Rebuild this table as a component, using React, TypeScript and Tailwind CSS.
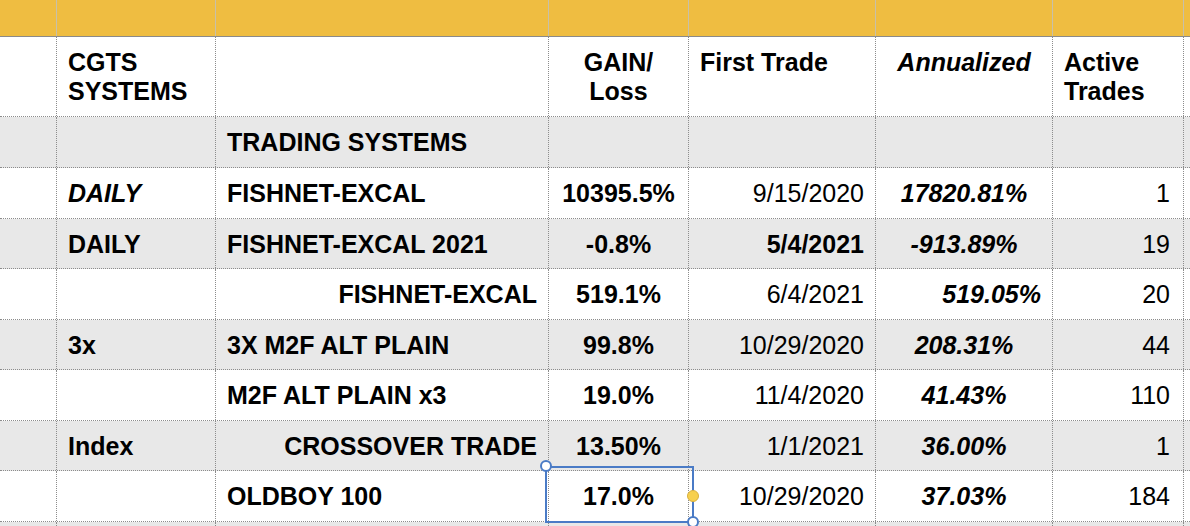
import React from "react";

type Cell = {
  t?: React.ReactNode;
  a?: "l" | "c" | "r";
  b?: boolean;
  i?: boolean;
};

const GRID =
  "grid grid-cols-[57px_159px_333px_140px_187px_177px_131px_6px]";

function Row({
  cells,
  gray,
  h,
}: {
  cells: Cell[];
  gray?: boolean;
  h: string;
}) {
  return (
    <div
      className={`${GRID} ${h} ${gray ? "bg-[#e8e8e8]" : "bg-white"} border-b border-dotted border-[#8c8c8c]`}
    >
      {cells.map((c, idx) => {
        const last = idx === cells.length - 1;
        const align =
          c.a === "r"
            ? "justify-end pr-[11px] pl-[6px]"
            : c.a === "c"
              ? "justify-center px-[6px]"
              : "justify-start pl-[11px] pr-[6px]";
        return (
          <div
            key={idx}
            className={`flex items-center pt-[2px] ${align} ${last ? "" : "border-r border-dotted border-[#8c8c8c]"} ${c.b ? "font-bold" : "font-normal"} ${c.i ? "italic" : ""} whitespace-nowrap`}
          >
            {c.t}
          </div>
        );
      })}
    </div>
  );
}

const E: Cell = {};

export default function App() {
  const rows: { cells: Cell[]; gray?: boolean; h: string }[] = [
    {
      gray: true,
      h: "h-[51px]",
      cells: [E, E, { t: "TRADING SYSTEMS", b: true }, E, E, E, E, E],
    },
    {
      h: "h-[51px]",
      cells: [
        E,
        { t: "DAILY", b: true, i: true },
        { t: "FISHNET-EXCAL", b: true },
        { t: "10395.5%", b: true, a: "c" },
        { t: "9/15/2020", a: "r" },
        { t: "17820.81%", b: true, i: true, a: "c" },
        { t: <span className="pr-[2px]">1</span>, a: "r" },
        E,
      ],
    },
    {
      gray: true,
      h: "h-[50px]",
      cells: [
        E,
        { t: "DAILY", b: true },
        { t: "FISHNET-EXCAL 2021", b: true },
        { t: "-0.8%", b: true, a: "c" },
        { t: "5/4/2021", b: true, a: "r" },
        { t: "-913.89%", b: true, i: true, a: "c" },
        { t: <span className="pr-[2px]">19</span>, a: "r" },
        E,
      ],
    },
    {
      h: "h-[51px]",
      cells: [
        E,
        E,
        { t: "FISHNET-EXCAL", b: true, a: "r" },
        { t: "519.1%", b: true, a: "c" },
        { t: "6/4/2021", a: "r" },
        { t: "519.05%", b: true, i: true, a: "r" },
        { t: <span className="pr-[2px]">20</span>, a: "r" },
        E,
      ],
    },
    {
      gray: true,
      h: "h-[50px]",
      cells: [
        E,
        { t: "3x", b: true },
        { t: "3X M2F ALT PLAIN", b: true },
        { t: "99.8%", b: true, a: "c" },
        { t: "10/29/2020", a: "r" },
        { t: "208.31%", b: true, i: true, a: "c" },
        { t: <span className="pr-[2px]">44</span>, a: "r" },
        E,
      ],
    },
    {
      h: "h-[51px]",
      cells: [
        E,
        E,
        { t: "M2F ALT PLAIN x3", b: true },
        { t: "19.0%", b: true, a: "c" },
        { t: "11/4/2020", a: "r" },
        { t: "41.43%", b: true, i: true, a: "c" },
        { t: <span className="pr-[2px]">110</span>, a: "r" },
        E,
      ],
    },
    {
      gray: true,
      h: "h-[50px]",
      cells: [
        E,
        { t: "Index", b: true },
        { t: "CROSSOVER TRADE", b: true, a: "r" },
        { t: "13.50%", b: true, a: "c" },
        { t: "1/1/2021", a: "r" },
        { t: "36.00%", b: true, i: true, a: "c" },
        { t: <span className="pr-[2px]">1</span>, a: "r" },
        E,
      ],
    },
    {
      h: "h-[51px]",
      cells: [
        E,
        E,
        { t: "OLDBOY 100", b: true },
        { t: "17.0%", b: true, a: "c" },
        { t: "10/29/2020", a: "r" },
        { t: "37.03%", b: true, i: true, a: "c" },
        { t: <span className="pr-[2px]">184</span>, a: "r" },
        E,
      ],
    },
  ];

  const hdr =
    "border-r border-dotted border-[#8c8c8c] pt-[11px] font-bold leading-[29px]";

  return (
    <div
      className="relative w-[1190px] h-[526px] overflow-hidden bg-white text-black text-[25px]"
      style={{ fontFamily: '"Liberation Sans", Arial, Helvetica, sans-serif' }}
    >
      {/* yellow top band */}
      <div className={`${GRID} h-[37px] bg-[#efbd41] border-b border-solid border-[#8a8a8a]`}>
        {[0, 1, 2, 3, 4, 5, 6].map((k) => (
          <div key={k} className="border-r border-solid border-[#c8c0a8]" />
        ))}
        <div />
      </div>

      {/* header row */}
      <div className={`${GRID} h-[80px] bg-white border-b border-dotted border-[#8c8c8c]`}>
        <div className="border-r border-dotted border-[#8c8c8c]" />
        <div className={`${hdr} pl-[11px]`}>
          CGTS
          <br />
          SYSTEMS
        </div>
        <div className="border-r border-dotted border-[#8c8c8c]" />
        <div className={`${hdr} text-center`}>
          GAIN/
          <br />
          Loss
        </div>
        <div className={`${hdr} pl-[11px]`}>First Trade</div>
        <div className={`${hdr} text-center italic`}>Annualized</div>
        <div className={`${hdr} pl-[11px]`}>
          Active
          <br />
          Trades
        </div>
        <div />
      </div>

      {rows.map((r, i) => (
        <Row key={i} cells={r.cells} gray={r.gray} h={r.h} />
      ))}

      <div className={`${GRID} h-[20px] bg-[#e8e8e8]`}>
        {[0, 1, 2, 3, 4, 5, 6].map((k) => (
          <div key={k} className="border-r border-dotted border-[#8c8c8c]" />
        ))}
        <div />
      </div>

      {/* selection overlay */}
      <div className="absolute left-[545px] top-[466px] w-[149px] h-[57px] border-2 border-[#4a7bc6] pointer-events-none" />
      <div className="absolute left-[540px] top-[460px] w-[12px] h-[12px] rounded-full bg-white border-2 border-[#4a7bc6]" />
      <div className="absolute left-[687px] top-[516px] w-[12px] h-[12px] rounded-full bg-white border-2 border-[#4a7bc6]" />
      <div className="absolute left-[687px] top-[490px] w-[12px] h-[12px] rounded-full bg-[#f7d04f] border border-[#d8b040]" />
    </div>
  );
}
